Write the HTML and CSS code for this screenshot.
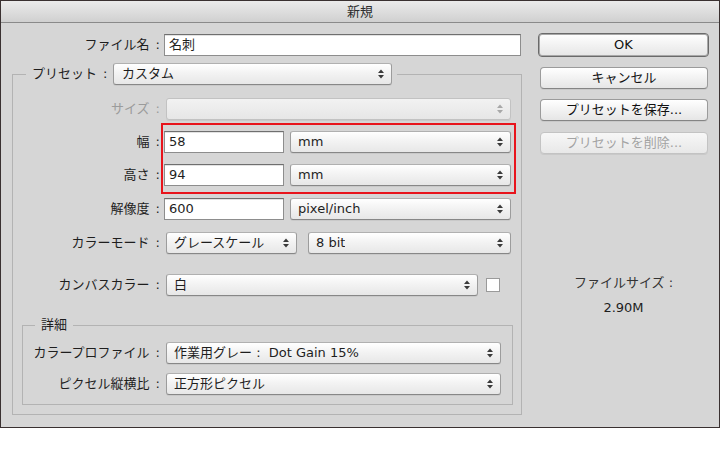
FILE: index.html
```html
<!DOCTYPE html>
<html lang="ja">
<head>
<meta charset="utf-8">
<title>新規</title>
<link rel="stylesheet" href="styles.css">
</head>
<body>
<div class="dialog">
  <div class="titlebar">新規</div>
  <div class="content">
    <div class="main">
      <div class="row row-name">
        <span class="lbl lbl-top">ファイル名<span class="colon">:</span></span>
        <div class="field w-name">名刺</div>
      </div>

      <fieldset class="group preset">
        <legend class="group-head">
          <span class="lbl-inline">プリセット<span class="colon">:</span></span>
          <div class="popup w-preset"><span class="val">カスタム</span><svg class="arrows" viewBox="0 0 6 10" width="6" height="10"><path d="M0 4L3 0.6L6 4Z"/><path d="M0 6L3 9.4L6 6Z"/></svg></div>
        </legend>

        <div class="row r-size">
          <span class="lbl disabled">サイズ<span class="colon">:</span></span>
          <div class="popup disabled first w-size"><span class="val"></span><svg class="arrows" viewBox="0 0 6 10" width="6" height="10"><path d="M0 4L3 0.6L6 4Z"/><path d="M0 6L3 9.4L6 6Z"/></svg></div>
        </div>

        <div class="dims">
          <div class="highlight"></div>
          <div class="row">
            <span class="lbl">幅<span class="colon">:</span></span>
            <div class="field w-num">58</div>
            <div class="popup w-unit"><span class="val">mm</span><svg class="arrows" viewBox="0 0 6 10" width="6" height="10"><path d="M0 4L3 0.6L6 4Z"/><path d="M0 6L3 9.4L6 6Z"/></svg></div>
          </div>
          <div class="row r-h">
            <span class="lbl">高さ<span class="colon">:</span></span>
            <div class="field w-num">94</div>
            <div class="popup w-unit"><span class="val">mm</span><svg class="arrows" viewBox="0 0 6 10" width="6" height="10"><path d="M0 4L3 0.6L6 4Z"/><path d="M0 6L3 9.4L6 6Z"/></svg></div>
          </div>
        </div>

        <div class="row r-res">
          <span class="lbl">解像度<span class="colon">:</span></span>
          <div class="field w-num">600</div>
          <div class="popup w-unit"><span class="val">pixel/inch</span><svg class="arrows" viewBox="0 0 6 10" width="6" height="10"><path d="M0 4L3 0.6L6 4Z"/><path d="M0 6L3 9.4L6 6Z"/></svg></div>
        </div>

        <div class="row r-mode">
          <span class="lbl">カラーモード<span class="colon">:</span></span>
          <div class="popup first w-mode"><span class="val">グレースケール</span><svg class="arrows" viewBox="0 0 6 10" width="6" height="10"><path d="M0 4L3 0.6L6 4Z"/><path d="M0 6L3 9.4L6 6Z"/></svg></div>
          <div class="popup w-bit"><span class="val">8 bit</span><svg class="arrows" viewBox="0 0 6 10" width="6" height="10"><path d="M0 4L3 0.6L6 4Z"/><path d="M0 6L3 9.4L6 6Z"/></svg></div>
        </div>

        <div class="row r-canvas">
          <span class="lbl">カンバスカラー<span class="colon">:</span></span>
          <div class="popup first w-canvas"><span class="val">白</span><svg class="arrows" viewBox="0 0 6 10" width="6" height="10"><path d="M0 4L3 0.6L6 4Z"/><path d="M0 6L3 9.4L6 6Z"/></svg></div>
          <div class="swatch"></div>
        </div>

        <fieldset class="group detail">
          <legend class="detail-head">詳細</legend>
          <div class="row r-profile">
            <span class="lbl lbl-detail">カラープロファイル<span class="colon">:</span></span>
            <div class="popup first w-detail"><span class="val">作業用グレー : &nbsp;Dot Gain 15%</span><svg class="arrows" viewBox="0 0 6 10" width="6" height="10"><path d="M0 4L3 0.6L6 4Z"/><path d="M0 6L3 9.4L6 6Z"/></svg></div>
          </div>
          <div class="row r-aspect">
            <span class="lbl lbl-detail">ピクセル縦横比<span class="colon">:</span></span>
            <div class="popup first w-detail"><span class="val">正方形ピクセル</span><svg class="arrows" viewBox="0 0 6 10" width="6" height="10"><path d="M0 4L3 0.6L6 4Z"/><path d="M0 6L3 9.4L6 6Z"/></svg></div>
          </div>
        </fieldset>
      </fieldset>
    </div>

    <div class="side">
      <div class="btn default">OK</div>
      <div class="btn b2">キャンセル</div>
      <div class="btn b3">プリセットを保存...</div>
      <div class="btn b3 disabled">プリセットを削除...</div>
      <div class="fsize-label">ファイルサイズ :</div>
      <div class="fsize-value">2.90M</div>
    </div>
  </div>
</div>
</body>
</html>
```

FILE: styles.css
```css
* { box-sizing: border-box; }

html, body {
  margin: 0;
  padding: 0;
  background: #ffffff;
}

body {
  font-family: "DejaVu Sans", "Noto Sans CJK JP", sans-serif;
  font-size: 13px;
  color: #1e1e1e;
}

.dialog {
  width: 720px;
  height: 428px;
  border: 1px solid #3a3131;
  background: #d6d6d6;
  display: flex;
  flex-direction: column;
}

.titlebar {
  flex: none;
  height: 22px;
  background: linear-gradient(#ebebeb, #d0d0d0);
  border-bottom: 1px solid #8a8a8a;
  text-align: center;
  line-height: 21px;
  color: #2e2e2e;
}

.content {
  flex: 1;
  display: flex;
}

.main {
  width: 521px;
  flex: none;
}

.row {
  display: flex;
  align-items: center;
  height: 22px;
}

.lbl {
  width: 147px;
  margin-right: 4px;
  text-align: right;
  line-height: 16px;
  white-space: nowrap;
}

.lbl-top { width: 159px; }
.lbl-detail { width: 137px; }

.colon { margin-left: 6px; }

.lbl.disabled { color: #9b9b9b; }

.row-name { margin-top: 11px; }

.field {
  height: 22px;
  background: #fff;
  border: 1px solid #8d8d8d;
  border-top-color: #6f6f6f;
  box-shadow: inset 0 1px 0 #e2e2e2;
  padding-left: 4px;
  line-height: 20px;
  white-space: nowrap;
}

.w-name { width: 357px; }
.w-num { width: 120px; }

.popup {
  height: 22px;
  display: flex;
  align-items: center;
  justify-content: space-between;
  padding: 0 7px 0 7px;
  background: linear-gradient(#ffffff, #f3f3f3 45%, #e7e7e7);
  border: 1px solid #9c9c9c;
  border-top-color: #b0b0b0;
  border-bottom-color: #878787;
  border-radius: 3px;
  box-shadow: 0 1px 0 rgba(0, 0, 0, 0.06);
  line-height: 16px;
  white-space: nowrap;
}

.popup .val { overflow: hidden; }

.arrows {
  flex: none;
  fill: #3a3a3a;
}

.popup.disabled {
  background: linear-gradient(#f2f2f2, #e6e6e6);
  border-color: #c2c2c2;
}

.popup.disabled .arrows { fill: #a8a8a8; }

.popup.first { margin-left: 2px; }

.w-size { width: 345px; }
.w-unit { width: 221px; margin-left: 6px; }
.w-mode { width: 131px; }
.w-bit { width: 203px; margin-left: 11px; }
.w-canvas { width: 312px; }
.w-detail { width: 335px; }
.w-preset { width: 279px; padding-left: 8px; }

.group {
  margin: 0;
  padding: 0;
  border: 1px solid #b3b3b3;
  min-width: 0;
}

.preset {
  margin: 7px 0 0 11px;
  width: 510px;
  padding-bottom: 9px;
}

.group-head {
  display: flex;
  align-items: center;
  margin-left: 13px;
  padding: 0 5px 0 6px;
  height: 22px;
}

.lbl-inline {
  width: 75px;
  margin-right: 6px;
  text-align: right;
  line-height: 16px;
  white-space: nowrap;
}

.r-size { margin-top: 13px; }

.dims {
  position: relative;
  margin-top: 11px;
}

.r-h { margin-top: 11px; }

.highlight {
  position: absolute;
  left: 148px;
  top: -8px;
  width: 355px;
  height: 71px;
  border: 2px solid #e8141c;
  pointer-events: none;
}

.r-res { margin-top: 12px; }
.r-mode { margin-top: 12px; }
.r-canvas { margin-top: 20px; }

.swatch {
  width: 14px;
  height: 14px;
  margin-left: 8px;
  background: #ffffff;
  border: 1px solid #9a9a9a;
}

.detail {
  margin: 20px 0 0 9px;
  width: 491px;
  padding-bottom: 9px;
}

.detail-head {
  margin-left: 12px;
  padding: 0 6px;
  line-height: 18px;
  height: 18px;
}

.r-profile { margin-top: 8px; }
.r-aspect { margin-top: 9px; }

.side {
  width: 171px;
  margin-left: 16px;
  flex: none;
}

.btn {
  height: 22px;
  margin: 10px 1px 0 2px;
  border: 1px solid #9b9b9b;
  border-bottom-color: #858585;
  border-radius: 4px;
  background: linear-gradient(#ffffff, #f2f2f2 50%, #e6e6e6);
  box-shadow: 0 1px 0 rgba(0, 0, 0, 0.06);
  text-align: center;
  line-height: 20px;
  color: #111;
  white-space: nowrap;
}

.btn.default {
  height: 24px;
  margin: 10px 0 0 0;
  border: 1px solid #6a6a6a;
  box-shadow: inset 0 0 0 1px #a8a8a8;
  line-height: 22px;
}

.btn.b3 { margin-top: 10px; }
.btn.b3.disabled { margin-top: 11px; }

.btn.disabled {
  color: #a3a3a3;
  border-color: #c3c3c3;
  background: linear-gradient(#f7f7f7, #e8e8e8);
}

.fsize-label {
  margin-top: 120px;
  text-align: center;
  line-height: 18px;
  color: #333;
}

.fsize-value {
  margin-top: 7px;
  text-align: center;
  line-height: 18px;
  color: #1e1e1e;
}
```
